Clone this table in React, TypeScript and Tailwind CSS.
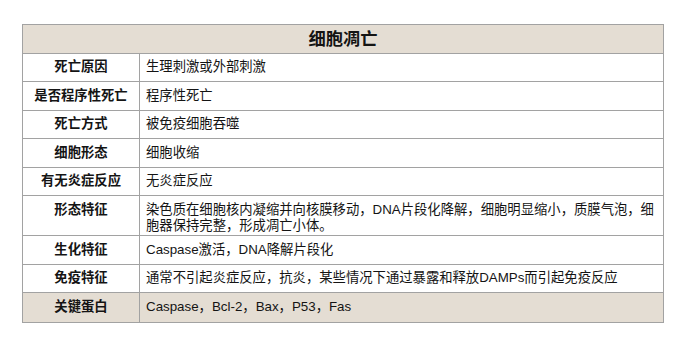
import React from "react";

type Row = { label: string; value: React.ReactNode; h: string; shaded?: boolean };

const rows: Row[] = [
  { label: "死亡原因", value: "生理刺激或外部刺激", h: "h-[28.5px]" },
  { label: "是否程序性死亡", value: "程序性死亡", h: "h-[28.5px]" },
  { label: "死亡方式", value: "被免疫细胞吞噬", h: "h-[28.5px]" },
  { label: "细胞形态", value: "细胞收缩", h: "h-[28.5px]" },
  { label: "有无炎症反应", value: "无炎症反应", h: "h-[28.5px]" },
  {
    label: "形态特征",
    value: (
      <>
        <span className="whitespace-nowrap">染色质在细胞核内凝缩并向核膜移动，DNA片段化降解，细胞明显缩小，质膜气泡，细</span>
        <br />
        <span className="whitespace-nowrap">胞器保持完整，形成凋亡小体。</span>
      </>
    ),
    h: "h-[40px]",
  },
  { label: "生化特征", value: "Caspase激活，DNA降解片段化", h: "h-[28.5px]" },
  { label: "免疫特征", value: "通常不引起炎症反应，抗炎，某些情况下通过暴露和释放DAMPs而引起免疫反应", h: "h-[28.5px]" },
  { label: "关键蛋白", value: "Caspase，Bcl-2，Bax，P53，Fas", h: "h-[28.5px]", shaded: true },
];

export default function App() {
  return (
    <div
      className="w-[691px] h-[350px] bg-white pt-[24px] pl-[22px] text-[#141414]"
      style={{ fontFamily: '"Liberation Sans", "Noto Sans CJK SC", sans-serif' }}
    >
      <div className="w-[642px] border border-[#a2a2a2] flex flex-col">
        <div className="h-[28.7px] bg-[#e4ddd3] border-b border-[#a2a2a2] flex items-center justify-center text-[17.3px] font-bold leading-[20px]">
          细胞凋亡
        </div>
        {rows.map((r, i) => (
          <div
            key={r.label}
            className={`${r.h} flex ${i < rows.length - 1 ? "border-b border-[#a2a2a2]" : ""} ${r.shaded ? "bg-[#e4ddd3]" : "bg-white"}`}
          >
            <div className="w-[117px] shrink-0 border-r border-[#a2a2a2] pt-[5.5px] text-center text-[13.33px] leading-[16px] font-bold">
              {r.label}
            </div>
            <div className="flex-1 pt-[5.5px] pl-[6px] pr-[4px] text-[13.33px] leading-[16px]">{r.value}</div>
          </div>
        ))}
      </div>
    </div>
  );
}
